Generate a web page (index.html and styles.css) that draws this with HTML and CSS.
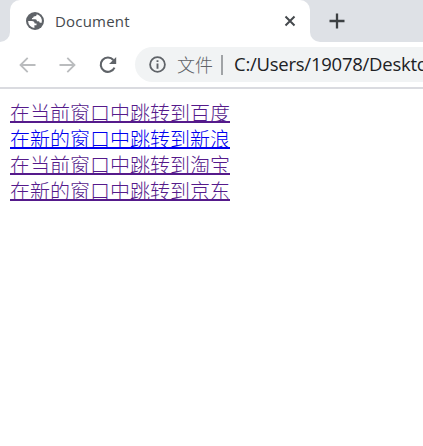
FILE: index.html
```html
<!DOCTYPE html>
<html lang="zh-CN">
<head>
<meta charset="utf-8">
<title>Document</title>
<link rel="stylesheet" href="styles.css">
</head>
<body>
<header class="tabs">
  <div class="edge edge-left"></div>
  <div class="tab">
    <svg class="globe" width="18" height="18" viewBox="0 0 18 18"><circle cx="9" cy="9" r="9" fill="#5f6368"/><path d="M10.8 2.2 10.5 3.2Q10.2 4.1 9 4.2L7.7 4.4Q7.4 6 6.1 6.1L5.8 7.2H9.2Q11 7.4 11 9.2H12.5Q13.7 9.4 13.7 10.8H15.7A7 7 0 0 0 10.8 2.2ZM2.1 9H6.2Q8.7 9.2 8.7 11.5H10.5V13.2H8.4V15.9A7 7 0 0 1 2.1 9Z" fill="#fff"/></svg>
    <span class="title">Document</span>
    <svg class="close" width="12" height="12" viewBox="0 0 12 12"><path d="M1.5 1.5 10.5 10.5M10.5 1.5 1.5 10.5" fill="none" stroke="#45494d" stroke-width="2"/></svg>
  </div>
  <div class="edge edge-right">
    <svg width="16" height="16" viewBox="0 0 16 16"><path d="M8 .5V15.5M.5 8H15.5" fill="none" stroke="#3c4043" stroke-width="2.3"/></svg>
  </div>
</header>
<nav class="toolbar">
  <svg class="back" width="18" height="18" viewBox="0 0 18 18"><path d="M16.5 9H2M8.7 1.8 1.5 9 8.7 16.2" fill="none" stroke="#babcbe" stroke-width="1.8"/></svg>
  <svg class="forward" width="18" height="18" viewBox="0 0 18 18"><path d="M.5 9H15M8.3 1.8 15.5 9 8.3 16.2" fill="none" stroke="#babcbe" stroke-width="1.8"/></svg>
  <svg class="reload" width="18" height="18" viewBox="0 0 18 18"><path d="M14.4 4A7.2 7.2 0 1 0 15.5 11.6" fill="none" stroke="#5f6368" stroke-width="2.1"/><path d="M17.2.9V8H10.1Z" fill="#5f6368"/></svg>
  <div class="address">
    <svg class="info" width="17" height="17" viewBox="0 0 17 17"><circle cx="8.5" cy="8.5" r="7.4" fill="none" stroke="#5f6368" stroke-width="1.8"/><path d="M8.5 4.2V6M8.5 7.5V12.7" stroke="#5f6368" stroke-width="1.9"/></svg>
    <span class="scheme">文件</span>
    <span class="divider"></span>
    <span class="path">C:/Users/19078/Desktop</span>
  </div>
</nav>
<main class="page">
  <a class="link visited" href="#baidu">在当前窗口中跳转到百度</a>
  <a class="link" href="#sina">在新的窗口中跳转到新浪</a>
  <a class="link visited" href="#taobao">在当前窗口中跳转到淘宝</a>
  <a class="link visited" href="#jd">在新的窗口中跳转到京东</a>
</main>
</body>
</html>
```
FILE: styles.css
```css
* { box-sizing: border-box; }
body {
  margin: 0;
  height: 446px;
  overflow: hidden;
  background: #fff;
  font-family: "Open Sans", "Noto Sans CJK SC", sans-serif;
}
svg { display: block; flex: none; }
.tabs {
  display: flex;
  height: 42px;
  background: linear-gradient(#dee1e6 50%, #fff 50%);
}
.edge { height: 42px; background: #dee1e6; flex: none; }
.edge-left { width: 10px; border-bottom-right-radius: 10px; }
.edge-right {
  flex: 1;
  border-bottom-left-radius: 10px;
  padding: 13px 0 0 19px;
}
.tab {
  display: flex;
  align-items: center;
  width: 300px;
  height: 42px;
  padding: 0 14px 0 16px;
  background: #fff;
  border-radius: 10px 10px 0 0;
}
.title {
  margin-left: 11px;
  font-size: 15px;
  letter-spacing: .2px;
  line-height: 20px;
  color: #45494d;
}
.close { margin-left: auto; }
.toolbar {
  display: flex;
  align-items: center;
  height: 47px;
  padding-left: 19px;
  border-bottom: 2px solid #dadbe0;
}
.forward { margin-left: 22px; }
.reload { margin-left: 22px; }
.address {
  display: flex;
  align-items: center;
  height: 35px;
  flex: 1;
  min-width: 0;
  overflow: hidden;
  margin-left: 18px;
  padding-left: 14px;
  border-radius: 18px 0 0 18px;
  background: #f1f3f4;
  font-size: 18px;
  white-space: nowrap;
}
.scheme {
  margin: -2px 0 0 11px;
  font-family: "Noto Sans CJK SC", sans-serif;
  font-weight: 300;
  color: #5f6368;
}
.divider { width: 2px; height: 20px; margin-left: 8px; background: #a0a3a6; flex: none; }
.path { margin: -2px 0 0 11px; color: #202124; font-size: 18.5px; letter-spacing: -.25px; }
.page {
  display: flex;
  flex-direction: column;
  align-items: flex-start;
  padding: 11px 10px;
}
.link {
  height: 26px;
  font: 300 20px/26px "Noto Sans CJK SC", sans-serif;
  color: #00e;
  text-decoration: underline;
  text-decoration-thickness: 2px;
  text-decoration-skip-ink: none;
  text-underline-offset: 0;
}
.visited { color: #551a8b; }
```
